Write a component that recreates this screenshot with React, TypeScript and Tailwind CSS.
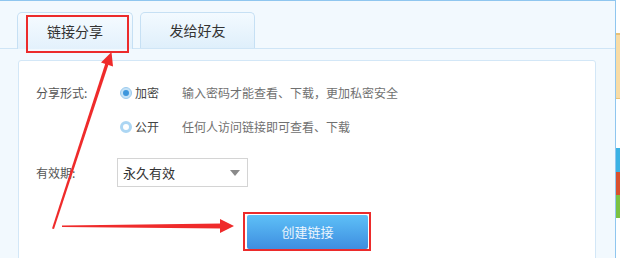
import React from "react";

const font = { fontFamily: '"Noto Sans CJK SC", "Noto Sans", sans-serif' };

export default function App() {
  return (
    <div
      className="relative flex w-[620px] h-[258px] overflow-hidden bg-white"
      style={font}
    >
      <ShareDialog />
      <SideStrip />
      <Annotations />
    </div>
  );
}

function ShareDialog() {
  return (
    <div className="flex flex-col w-[616px] h-full shrink-0 bg-[#f2f9fe] border-t border-r border-[#8fc6ef]">
      <div className="flex items-end gap-[7px] h-[48px] pl-[17px] border-b border-[#cfe5f6] shrink-0">
        <Tab label="链接分享" active />
        <Tab label="发给好友" />
      </div>
      <div className="flex-1 pt-[11px] px-[18px]">
        <div className="h-[220px] w-[578px] bg-white border border-[#d3e7f7] rounded-[3px] pt-[22px] pl-[17px]">
          <div className="flex items-center h-[20px]">
            <span className="w-[81px] shrink-0 text-[12px] text-[#555]">分享形式:</span>
            <Radio checked label="加密" hint="输入密码才能查看、下载，更加私密安全" />
          </div>
          <div className="flex items-center h-[20px] mt-[14px]">
            <span className="block w-[81px] shrink-0" />
            <Radio label="公开" hint="任何人访问链接即可查看、下载" />
          </div>
          <div className="flex items-center mt-[21px]">
            <span className="w-[81px] shrink-0 text-[12px] text-[#555]">有效期:</span>
            <div className="flex items-center justify-between w-[131px] h-[29px] border border-[#d4d4d4] bg-white pl-[5px] pr-[7px]">
              <span className="text-[13px] text-[#333]">永久有效</span>
              <span className="w-0 h-0 border-l-[5px] border-r-[5px] border-t-[6px] border-l-transparent border-r-transparent border-t-[#8a8a8a]" />
            </div>
          </div>
          <button className="mt-[28px] ml-[211px] w-[121px] h-[34px] rounded-[2px] bg-gradient-to-b from-[#5ec0f7] to-[#3f8ee0] text-[13px] text-white/90">
            创建链接
          </button>
        </div>
      </div>
    </div>
  );
}

function Tab({ label, active }: { label: string; active?: boolean }) {
  return (
    <div
      className={
        active
          ? "flex items-center justify-center w-[116px] h-[37px] -mb-px rounded-t-[5px] border border-b-0 border-[#c6e0f4] bg-gradient-to-b from-[#f6fbff] to-[#e3f1fc] text-[14px] text-[#333]"
          : "flex items-center justify-center w-[115px] h-[36px] rounded-t-[5px] border border-b-0 border-[#c6e0f4] bg-gradient-to-b from-[#f3faff] to-[#dfeffb] text-[14px] text-[#333]"
      }
    >
      {label}
    </div>
  );
}

function Radio({
  label,
  hint,
  checked,
}: {
  label: string;
  hint: string;
  checked?: boolean;
}) {
  return (
    <div className="flex items-center ml-[3px] whitespace-nowrap">
      {checked ? (
        <span className="flex shrink-0 items-center justify-center w-[12px] h-[12px] rounded-full bg-[#c4e2f7] border border-[#9ccbee]">
          <span className="w-[6px] h-[6px] rounded-full bg-[#3d96dc]" />
        </span>
      ) : (
        <span className="block shrink-0 w-[12px] h-[12px] rounded-full border-[3px] border-[#acd6f3] bg-white" />
      )}
      <span className="block shrink-0 w-[50px] pl-[3px] text-[12px] text-[#444]">{label}</span>
      <span className="text-[12px] text-[#707070]">{hint}</span>
    </div>
  );
}

function SideStrip() {
  return (
    <div className="flex flex-col w-[4px] shrink-0">
      <div className="h-[33px] bg-white" />
      <div className="h-[66px] bg-[#f8dca6] border-t-2 border-b border-[#e9c278]" />
      <div className="h-[49px] bg-white" />
      <div className="h-[24px] bg-[#3bb2e4]" />
      <div className="h-[23px] bg-[#d9512f]" />
      <div className="h-[23px] bg-[#7bc243]" />
    </div>
  );
}

function Annotations() {
  return (
    <>
      <div className="absolute left-[26px] top-[15px] w-[103px] h-[38px] border-2 border-[#ec2b2b]" />
      <div className="absolute left-[243px] top-[212px] w-[128px] h-[39px] border-2 border-[#ec2b2b]" />
      <svg
        className="absolute left-0 top-0 pointer-events-none"
        width={620}
        height={258}
        viewBox="0 0 620 258"
      >
        <polygon
          points="52,228.5 54,229 108.5,64.5 105.3,63.4"
          fill="#ef2b2b"
        />
        <polygon points="111.5,52 101,62.5 113,66.5" fill="#ef2b2b" />
        <polygon points="62,225.5 62,227 222,228.5 222,223.5" fill="#ef2b2b" />
        <polygon points="234,226 220,219 220,233" fill="#ef2b2b" />
      </svg>
    </>
  );
}
